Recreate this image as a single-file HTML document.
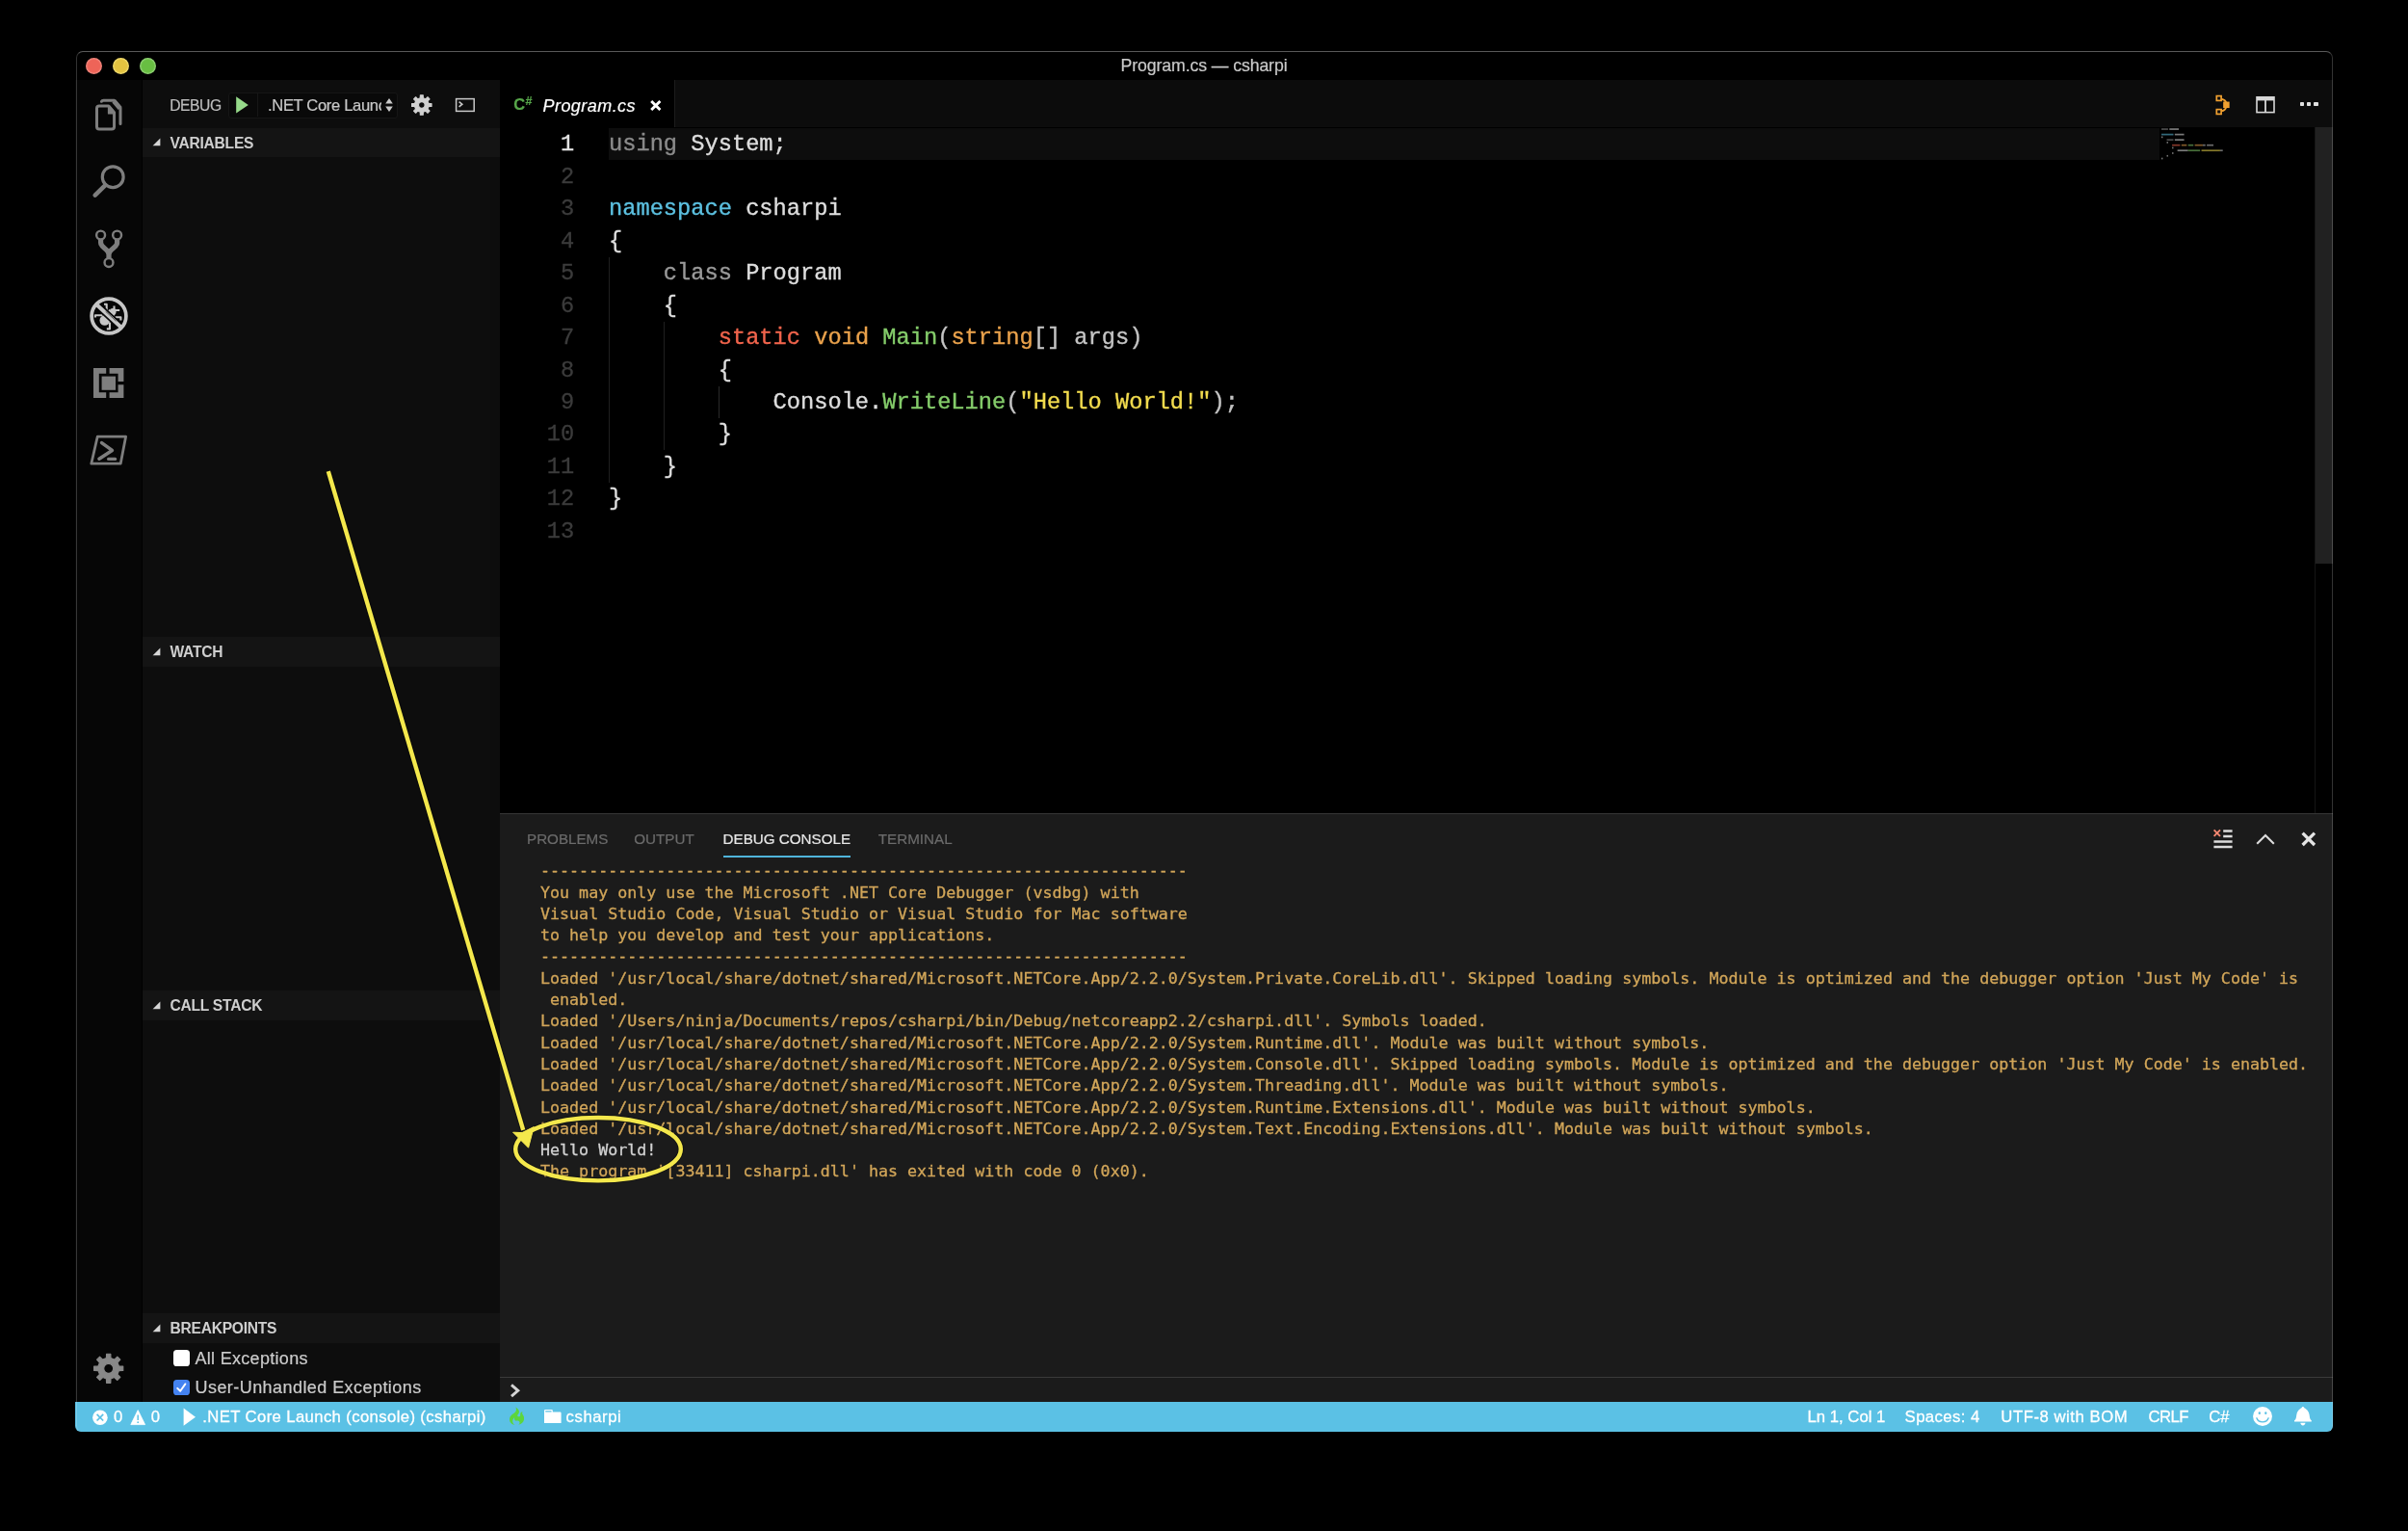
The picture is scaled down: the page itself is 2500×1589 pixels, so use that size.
<!DOCTYPE html><html lang="en"><head><meta charset="utf-8"><title>Program.cs — csharpi</title><style>
*{box-sizing:border-box;margin:0;padding:0}
html,body{width:2500px;height:1589px;background:#000;overflow:hidden}
body{position:relative;font-family:"Liberation Sans",sans-serif;color:#ccc}
.abs{position:absolute}
#win{position:absolute;left:78px;top:53px;width:2344px;height:1433px;border-radius:7px 7px 6px 6px;overflow:hidden;background:#000}
#winborder{position:absolute;left:78.5px;top:53px;width:2343.5px;height:1433px;border-radius:7px 7px 6px 6px;border:1.4px solid rgba(255,255,255,0.2);border-top-color:#595959;border-bottom:0;pointer-events:none}
.t{position:absolute;white-space:pre;line-height:1;-webkit-text-stroke:0.2px}
.ui{font-family:"Liberation Sans",sans-serif}
.hdr{position:absolute;left:147.5px;width:371px;height:30.5px;background:#141414}
.hdr .tx{position:absolute;left:29px;top:0;height:30.5px;line-height:32.4px;font-size:15.6px;letter-spacing:-0.25px;font-weight:bold;color:#cfcfcf;white-space:pre}
.hdr svg{position:absolute;left:10.5px;top:10.6px}
.code{-webkit-text-stroke:0.35px;position:absolute;left:632px;font-family:"Liberation Mono",monospace;font-size:23.69px;line-height:33.45px;height:33.45px;white-space:pre;color:#dcdcdc}
.ln{-webkit-text-stroke:0.3px;position:absolute;left:540px;width:56.3px;text-align:right;font-family:"Liberation Mono",monospace;font-size:23.69px;line-height:33.45px;height:33.45px;color:#3b3b3b;white-space:pre}
.con{-webkit-text-stroke:0.3px;position:absolute;left:561px;font-family:"DejaVu Sans Mono","Liberation Mono",monospace;font-size:16.66px;line-height:22.3px;height:22.3px;white-space:pre;color:#d2a659}
.ptab{-webkit-text-stroke:0.2px;position:absolute;top:862.7px;font-size:15.2px;line-height:15px;color:#6b6b6b;white-space:pre}
.sb{position:absolute;top:1455px;height:31px;line-height:31.2px;font-size:16.7px;color:#fff;white-space:pre;-webkit-text-stroke:0.3px #fff}
</style></head><body>
<div id="win"><div class="abs" style="left:-78px;top:-53px;width:2500px;height:1589px;will-change:transform">
<div class="abs" style="left:78px;top:53px;width:2344px;height:30px;background:#000"></div>
<div class="abs" style="left:89.1px;top:60.0px;width:17px;height:17px;border-radius:50%;background:radial-gradient(circle,#ee6458 0%,#ee6458 52%,#f0837a 64%,#f0837a 100%)"></div>
<div class="abs" style="left:117.0px;top:60.0px;width:17px;height:17px;border-radius:50%;background:radial-gradient(circle,#e3c340 0%,#e3c340 52%,#eed868 64%,#eed868 100%)"></div>
<div class="abs" style="left:144.9px;top:60.0px;width:17px;height:17px;border-radius:50%;background:radial-gradient(circle,#68be42 0%,#68be42 52%,#8cd070 64%,#8cd070 100%)"></div>
<div class="t ui" id="title" style="left:1050px;width:400px;text-align:center;top:60.3px;font-size:17.7px;letter-spacing:-0.1px;color:#cacaca">Program.cs — csharpi</div>
<div class="abs" style="left:78px;top:83px;width:69px;height:1372px;background:#060606"></div>
<div class="abs" style="left:147.5px;top:83px;width:371px;height:1372px;background:#0d0d0d"></div>
<div class="abs" style="left:518.5px;top:83px;width:1903.5px;height:49px;background:#0c0c0c"></div>
<div class="abs" style="left:518.5px;top:83px;width:182px;height:49px;background:#000;border-right:1.4px solid #1d1d1d"></div>
<div class="abs" style="left:518.5px;top:132px;width:1903.5px;height:712px;background:#000"></div>
<div class="abs" style="left:518.5px;top:844px;width:1903.5px;height:611px;background:#1b1b1b;border-top:1.5px solid #363636"></div>
<div class="abs" style="left:78px;top:1455px;width:2344px;height:31px;background:#5bc1e5"></div>
<svg class="abs" style="left:90px;top:95px" width="46" height="46" viewBox="0 0 46 46">
<g fill="none" stroke="#7e7e7e" stroke-width="3" stroke-linecap="round" stroke-linejoin="round">
<path d="M15.4 10.3 Q15.9 9.3 17.5 9.3 H28.6 L35 16.8 V33.6"/>
<path d="M13 15 H22.8 L28.55 21.8 V36.5 Q28.55 39.05 26 39.05 H13 Q10.5 39.05 10.5 36.5 V17.5 Q10.5 15 13 15 Z"/>
</g>
<path d="M28.2 9.9 L34.6 17.4" stroke="#7e7e7e" stroke-width="4.8" fill="none"/>
<path d="M21.9 14 V23.6 H29.6 V21.4 L23.6 14 Z" fill="#7e7e7e"/>
</svg>
<svg class="abs" style="left:90px;top:165px" width="46" height="46" viewBox="0 0 46 46">
<circle cx="27.2" cy="18.7" r="10.9" fill="none" stroke="#7e7e7e" stroke-width="3.2"/>
<path d="M19.4 27.1 L8.7 37.6" stroke="#7e7e7e" stroke-width="4.6" stroke-linecap="round"/>
</svg>
<svg class="abs" style="left:90px;top:233px" width="46" height="50" viewBox="0 0 46 50">
<g fill="none" stroke="#7e7e7e">
<circle cx="14.6" cy="11.1" r="4.45" stroke-width="2.4"/>
<circle cx="31.6" cy="11.1" r="4.45" stroke-width="2.4"/>
<circle cx="23" cy="39.6" r="4.45" stroke-width="2.4"/>
<path d="M14.6 15.4 V19 C14.6 24 23 25.5 23 31 V35.2" stroke-width="5.2"/>
<path d="M31.6 15.4 V19 C31.6 24 23 25.5 23 31" stroke-width="5.2"/>
</g></svg>
<svg class="abs" style="left:91.15px;top:305.9px" width="44" height="44" viewBox="0 0 44 44">
<circle cx="22" cy="22" r="17.9" fill="none" stroke="#c6c6c6" stroke-width="3.7"/>
<g fill="#c6c6c6" stroke="none">
<circle cx="17.75" cy="26.5" r="5.3"/>
<circle cx="26.2" cy="17.4" r="3.4"/>
<path d="M15 22.5 L22.5 15 L28.5 20.5 L21.5 28.5 Z"/>
</g>
<g fill="none" stroke="#c6c6c6" stroke-width="2.1" stroke-linejoin="round">
<path d="M7.9 23.6 V21.3 H15.5 M17 9.8 H19.7 V16 M19.8 35.4 H22.95 V28.5 M28.5 23.2 H34.4 V26.4 M27.5 15 V11.4 M28.5 16 H33.2"/>
</g>
<path d="M11.6 12.3 L32.2 31.3" stroke="#060606" stroke-width="7.4"/>
<path d="M9.4 10.3 L34.3 33.2" stroke="#c6c6c6" stroke-width="4"/>
<path d="M18.6 17.2 L29.6 27.3" stroke="#060606" stroke-opacity="0.75" stroke-width="0.8"/>
</svg>
<svg class="abs" style="left:97.3px;top:382px" width="31.4" height="31" viewBox="0 0 31.4 31">
<path d="M0 0 H13.2 V5.8 H5.8 V25.2 H13.2 V31 H0 Z" fill="#7e7e7e"/>
<path d="M16.6 0 H31.4 V14 H25.6 V5.8 H16.6 Z" fill="#7e7e7e"/>
<path d="M16.6 31 H31.4 V17.2 H25.6 V25.2 H16.6 Z" fill="#7e7e7e"/>
<rect x="8.6" y="8.6" width="14.4" height="14.2" fill="#7e7e7e"/>
</svg>
<svg class="abs" style="left:91px;top:449px" width="44" height="36" viewBox="0 0 44 36">
<path d="M10.2 4.2 H39.6 L34.2 32.2 H3.8 Z" fill="none" stroke="#7e7e7e" stroke-width="2.8" stroke-linejoin="round"/>
<path d="M14.6 10.6 L25.4 18.4 L12 27.2" fill="none" stroke="#7e7e7e" stroke-width="3.6" stroke-linecap="round" stroke-linejoin="round"/>
<path d="M21.6 27.4 H28.6" stroke="#7e7e7e" stroke-width="3.2" stroke-linecap="round"/>
</svg>
<svg class="abs" style="left:0;top:0" width="2500" height="1589" viewBox="0 0 2500 1589">
<path d="M110.45 1409.53 L110.58 1405.25 L114.82 1405.25 L114.95 1409.53 L118.72 1411.09 L121.84 1408.16 L124.84 1411.16 L121.91 1414.28 L123.47 1418.05 L127.75 1418.18 L127.75 1422.42 L123.47 1422.55 L121.91 1426.32 L124.84 1429.44 L121.84 1432.44 L118.72 1429.51 L114.95 1431.07 L114.82 1435.35 L110.58 1435.35 L110.45 1431.07 L106.68 1429.51 L103.56 1432.44 L100.56 1429.44 L103.49 1426.32 L101.93 1422.55 L97.65 1422.42 L97.65 1418.18 L101.93 1418.05 L103.49 1414.28 L100.56 1411.16 L103.56 1408.16 L106.68 1411.09 Z M107.70 1420.30 a5.0 5.0 0 1 0 10.0 0 a5.0 5.0 0 1 0 -10.0 0 Z" fill="#888888" fill-rule="evenodd" stroke="#888888" stroke-width="1.2" stroke-linejoin="round"/>
<path d="M436.29 101.76 L436.36 98.80 L439.24 98.80 L439.31 101.76 L441.85 102.81 L443.99 100.77 L446.03 102.81 L443.99 104.95 L445.04 107.49 L448.00 107.56 L448.00 110.44 L445.04 110.51 L443.99 113.05 L446.03 115.19 L443.99 117.23 L441.85 115.19 L439.31 116.24 L439.24 119.20 L436.36 119.20 L436.29 116.24 L433.75 115.19 L431.61 117.23 L429.57 115.19 L431.61 113.05 L430.56 110.51 L427.60 110.44 L427.60 107.56 L430.56 107.49 L431.61 104.95 L429.57 102.81 L431.61 100.77 L433.75 102.81 Z M434.50 109.00 a3.3 3.3 0 1 0 6.6 0 a3.3 3.3 0 1 0 -6.6 0 Z" fill="#d0d0d0" fill-rule="evenodd" stroke="#d0d0d0" stroke-width="1.2" stroke-linejoin="round"/>
</svg>
<div class="t ui" style="left:176.2px;top:101.8px;font-size:15.7px;letter-spacing:-0.45px;color:#bdbdbd">DEBUG</div>
<div class="abs" style="left:237px;top:95.5px;width:175.5px;height:27px;background:#090909;border:1.3px solid #161616;border-radius:3px"></div>
<div class="abs" style="left:266.5px;top:97px;width:1.3px;height:24px;background:#161616"></div>
<svg class="abs" style="left:244px;top:99px" width="16" height="20" viewBox="0 0 16 20"><path d="M1.2 1.2 L13.8 9.9 L1.2 18.6 Z" fill="#96d98a"/></svg>
<div class="abs" style="left:278px;top:97px;width:117.5px;height:24px;overflow:hidden"><div class="t ui" style="left:0;top:4.5px;font-size:16.6px;letter-spacing:-0.35px;color:#c8c8c8">.NET Core Launch (console) (csharpi)</div></div>
<svg class="abs" style="left:399px;top:101px" width="10" height="16" viewBox="0 0 10 16"><path d="M5 1 L8.8 6.4 H1.2 Z M5 15 L8.8 9.6 H1.2 Z" fill="#c8c8c8"/></svg>
<svg class="abs" style="left:472px;top:101px" width="22" height="16" viewBox="0 0 22 16">
<rect x="1.6" y="1.6" width="18.6" height="12.8" fill="none" stroke="#c8c8c8" stroke-width="1.5"/>
<path d="M4.6 4.6 L7.8 7.2 L4.6 9.8" fill="none" stroke="#c8c8c8" stroke-width="1.6"/>
</svg>
<div class="hdr" style="top:132.6px"><svg width="9" height="9" viewBox="0 0 9 9"><path d="M8.4 0.6 V8.2 H0.6 Z" fill="#d6d6d6"/></svg><div class="tx">VARIABLES</div></div>
<div class="hdr" style="top:661.4px"><svg width="9" height="9" viewBox="0 0 9 9"><path d="M8.4 0.6 V8.2 H0.6 Z" fill="#d6d6d6"/></svg><div class="tx">WATCH</div></div>
<div class="hdr" style="top:1028.2px"><svg width="9" height="9" viewBox="0 0 9 9"><path d="M8.4 0.6 V8.2 H0.6 Z" fill="#d6d6d6"/></svg><div class="tx">CALL STACK</div></div>
<div class="hdr" style="top:1363.3px"><svg width="9" height="9" viewBox="0 0 9 9"><path d="M8.4 0.6 V8.2 H0.6 Z" fill="#d6d6d6"/></svg><div class="tx">BREAKPOINTS</div></div>
<div class="abs" style="left:180px;top:1401.3px;width:16.6px;height:16.6px;border-radius:3.6px;background:#fff"></div>
<div class="t ui" style="left:202.5px;top:1400.5px;font-size:18px;letter-spacing:0.3px;color:#cbcbcb">All Exceptions</div>
<div class="abs" style="left:180px;top:1431.5px;width:16.6px;height:16.6px;border-radius:3.6px;background:#4483f1"></div>
<svg class="abs" style="left:180px;top:1431.5px" width="16.6" height="16.6" viewBox="0 0 16.6 16.6"><path d="M4.2 8.8 L7.2 11.8 L12.4 4.4" fill="none" stroke="#fff" stroke-width="1.9" stroke-linecap="round" stroke-linejoin="round"/></svg>
<div class="t ui" style="left:202.5px;top:1431px;font-size:18px;letter-spacing:0.44px;color:#cbcbcb">User-Unhandled Exceptions</div>
<div class="t ui" style="left:533.2px;top:99.6px;font-size:16.5px;font-weight:bold;color:#57a64a;letter-spacing:-0.3px">C</div>
<div class="t ui" style="left:545.6px;top:99.2px;font-size:12.5px;font-weight:bold;color:#57a64a">#</div>
<div class="t ui" id="tabname" style="left:563.5px;top:101.1px;font-size:18px;letter-spacing:0.45px;font-style:italic;color:#fff">Program.cs</div>
<svg class="abs" style="left:675px;top:103.6px" width="11.6" height="11" viewBox="0 0 11.6 11"><path d="M1.2 1 L10.4 10 M10.4 1 L1.2 10" stroke="#fff" stroke-width="2.9"/></svg>
<svg class="abs" style="left:2298px;top:97px" width="20" height="24" viewBox="0 0 20 24">
<g fill="none" stroke="#f0a030" stroke-width="1.7">
<rect x="3.3" y="2.6" width="4.8" height="4.8"/>
<rect x="3.3" y="16.6" width="4.8" height="4.8"/>
<rect x="11" y="9.4" width="4.8" height="4.8" fill="#f0a030"/>
<path d="M8.1 5.6 C11 6.2 12.6 7.6 13.2 9.4 M8.1 18.4 C11 17.8 12.6 16.4 13.2 14.2" stroke-width="1.8"/>
</g></svg>
<svg class="abs" style="left:2341px;top:99px" width="22" height="20" viewBox="0 0 22 20">
<rect x="2" y="1.8" width="18" height="15.8" fill="none" stroke="#d8d8d8" stroke-width="1.6"/>
<rect x="2" y="1.8" width="18" height="3.6" fill="#d8d8d8"/>
<path d="M11 4 V17" stroke="#d8d8d8" stroke-width="1.8"/>
</svg>
<div class="abs" style="left:2388.3px;top:105.9px;width:4.2px;height:4.2px;background:#e0e0e0;border-radius:0.8px"></div>
<div class="abs" style="left:2395.3px;top:105.9px;width:4.2px;height:4.2px;background:#e0e0e0;border-radius:0.8px"></div>
<div class="abs" style="left:2402.4px;top:105.9px;width:4.2px;height:4.2px;background:#e0e0e0;border-radius:0.8px"></div>
<div class="abs" style="left:632px;top:132.9px;width:1610px;height:32.8px;background:#0d0d0d"></div>
<div class="abs" style="left:2402.5px;top:132px;width:19.5px;height:453px;background:#212121"></div>
<div class="abs" style="left:2402.5px;top:132px;width:1.3px;height:712px;background:#161616"></div>
<div class="abs" style="left:632px;top:266.70px;width:1.3px;height:234.15px;background:#1f1f1f"></div>
<div class="abs" style="left:689.2px;top:333.60px;width:1.3px;height:133.80px;background:#1f1f1f"></div>
<div class="abs" style="left:746px;top:400.50px;width:1.3px;height:33.45px;background:#2a2a2a"></div>
<div class="ln" style="top:133.40px;color:#e4e4e4">1</div>
<div class="code" style="top:133.40px"><span style="color:#8b8b8b">using</span> <span style="color:#dedede">System;</span></div>
<div class="ln" style="top:166.85px;color:#3b3b3b">2</div>
<div class="ln" style="top:200.30px;color:#3b3b3b">3</div>
<div class="code" style="top:200.30px"><span style="color:#5cc0e0">namespace</span> <span style="color:#dedede">csharpi</span></div>
<div class="ln" style="top:233.75px;color:#3b3b3b">4</div>
<div class="code" style="top:233.75px"><span style="color:#dedede">{</span></div>
<div class="ln" style="top:267.20px;color:#3b3b3b">5</div>
<div class="code" style="top:267.20px">    <span style="color:#9a9a9a">class</span> <span style="color:#dedede">Program</span></div>
<div class="ln" style="top:300.65px;color:#3b3b3b">6</div>
<div class="code" style="top:300.65px">    <span style="color:#dedede">{</span></div>
<div class="ln" style="top:334.10px;color:#3b3b3b">7</div>
<div class="code" style="top:334.10px">        <span style="color:#f0644c">static</span> <span style="color:#eaa24c">void</span> <span style="color:#84cc6a">Main</span><span style="color:#c4c4c4">(</span><span style="color:#eaa24c">string</span><span style="color:#c4c4c4">[] args)</span></div>
<div class="ln" style="top:367.55px;color:#3b3b3b">8</div>
<div class="code" style="top:367.55px">        <span style="color:#dedede">{</span></div>
<div class="ln" style="top:401.00px;color:#3b3b3b">9</div>
<div class="code" style="top:401.00px">            <span style="color:#dedede">Console.</span><span style="color:#84cc6a">WriteLine</span><span style="color:#c4c4c4">(</span><span style="color:#f2dc4e">"Hello World!"</span><span style="color:#c4c4c4">);</span></div>
<div class="ln" style="top:434.45px;color:#3b3b3b">10</div>
<div class="code" style="top:434.45px">        <span style="color:#dedede">}</span></div>
<div class="ln" style="top:467.90px;color:#3b3b3b">11</div>
<div class="code" style="top:467.90px">    <span style="color:#dedede">}</span></div>
<div class="ln" style="top:501.35px;color:#3b3b3b">12</div>
<div class="code" style="top:501.35px"><span style="color:#dedede">}</span></div>
<div class="ln" style="top:534.80px;color:#3b3b3b">13</div>
<svg class="abs" style="left:2244px;top:132px;opacity:0.55" width="160" height="40" viewBox="0 0 160 40">
<rect x="0.00" y="1.20" width="6.92" height="1.7" fill="#8b8b8b"/>
<rect x="8.31" y="1.20" width="9.70" height="1.7" fill="#dedede"/>
<rect x="0.00" y="6.74" width="12.46" height="1.7" fill="#5cc0e0"/>
<rect x="13.85" y="6.74" width="9.70" height="1.7" fill="#dedede"/>
<rect x="0.00" y="9.51" width="1.39" height="1.7" fill="#dedede"/>
<rect x="5.54" y="12.28" width="6.92" height="1.7" fill="#8b8b8b"/>
<rect x="13.85" y="12.28" width="9.70" height="1.7" fill="#dedede"/>
<rect x="5.54" y="15.05" width="1.39" height="1.7" fill="#dedede"/>
<rect x="11.08" y="17.82" width="8.31" height="1.7" fill="#f0644c"/>
<rect x="20.77" y="17.82" width="5.54" height="1.7" fill="#eaa24c"/>
<rect x="27.70" y="17.82" width="5.54" height="1.7" fill="#84cc6a"/>
<rect x="34.62" y="17.82" width="8.31" height="1.7" fill="#eaa24c"/>
<rect x="42.94" y="17.82" width="2.77" height="1.7" fill="#c4c4c4"/>
<rect x="47.09" y="17.82" width="6.92" height="1.7" fill="#c4c4c4"/>
<rect x="11.08" y="20.59" width="1.39" height="1.7" fill="#dedede"/>
<rect x="16.62" y="23.36" width="11.08" height="1.7" fill="#dedede"/>
<rect x="27.70" y="23.36" width="12.46" height="1.7" fill="#84cc6a"/>
<rect x="41.55" y="23.36" width="19.39" height="1.7" fill="#f2dc4e"/>
<rect x="60.94" y="23.36" width="2.77" height="1.7" fill="#c4c4c4"/>
<rect x="11.08" y="26.13" width="1.39" height="1.7" fill="#dedede"/>
<rect x="5.54" y="28.90" width="1.39" height="1.7" fill="#dedede"/>
<rect x="0.00" y="31.67" width="1.39" height="1.7" fill="#dedede"/>
</svg>
<div class="ptab ui" style="left:547px;">PROBLEMS</div>
<div class="ptab ui" style="left:658.3px;">OUTPUT</div>
<div class="ptab ui" style="left:750.6px;color:#e6e6e6">DEBUG CONSOLE</div>
<div class="ptab ui" style="left:911.8px;">TERMINAL</div>
<div class="abs" style="left:750.6px;top:888.3px;width:132.4px;height:1.5px;background:#4fb4da"></div>
<svg class="abs" style="left:2296px;top:859px" width="24" height="24" viewBox="0 0 24 24">
<g stroke="#dcdcdc" stroke-width="2.5">
<path d="M12.2 3.4 H21.6 M12.2 8.9 H21.6 M2.4 14.4 H21.6 M2.4 19.9 H21.6"/></g>
<path d="M2.6 2.4 L9 8.8 M9 2.4 L2.6 8.8" stroke="#f48771" stroke-width="1.9"/>
</svg>
<svg class="abs" style="left:2340px;top:862px" width="24" height="18" viewBox="0 0 24 18"><path d="M3.2 13.8 L12 5 L20.8 13.8" fill="none" stroke="#dcdcdc" stroke-width="2.1"/></svg>
<svg class="abs" style="left:2389px;top:863px" width="16" height="16" viewBox="0 0 16 16"><path d="M1.6 1.6 L14 14 M14 1.6 L1.6 14" stroke="#e4e4e4" stroke-width="3.3"/></svg>
<div class="con" style="top:893.20px;">-------------------------------------------------------------------</div>
<div class="con" style="top:915.50px;">You may only use the Microsoft .NET Core Debugger (vsdbg) with</div>
<div class="con" style="top:937.80px;">Visual Studio Code, Visual Studio or Visual Studio for Mac software</div>
<div class="con" style="top:960.10px;">to help you develop and test your applications.</div>
<div class="con" style="top:982.40px;">-------------------------------------------------------------------</div>
<div class="con" style="top:1004.70px;">Loaded '/usr/local/share/dotnet/shared/Microsoft.NETCore.App/2.2.0/System.Private.CoreLib.dll'. Skipped loading symbols. Module is optimized and the debugger option 'Just My Code' is</div>
<div class="con" style="top:1027.00px;"> enabled.</div>
<div class="con" style="top:1049.30px;">Loaded '/Users/ninja/Documents/repos/csharpi/bin/Debug/netcoreapp2.2/csharpi.dll'. Symbols loaded.</div>
<div class="con" style="top:1071.60px;">Loaded '/usr/local/share/dotnet/shared/Microsoft.NETCore.App/2.2.0/System.Runtime.dll'. Module was built without symbols.</div>
<div class="con" style="top:1093.90px;">Loaded '/usr/local/share/dotnet/shared/Microsoft.NETCore.App/2.2.0/System.Console.dll'. Skipped loading symbols. Module is optimized and the debugger option 'Just My Code' is enabled.</div>
<div class="con" style="top:1116.20px;">Loaded '/usr/local/share/dotnet/shared/Microsoft.NETCore.App/2.2.0/System.Threading.dll'. Module was built without symbols.</div>
<div class="con" style="top:1138.50px;">Loaded '/usr/local/share/dotnet/shared/Microsoft.NETCore.App/2.2.0/System.Runtime.Extensions.dll'. Module was built without symbols.</div>
<div class="con" style="top:1160.80px;">Loaded '/usr/local/share/dotnet/shared/Microsoft.NETCore.App/2.2.0/System.Text.Encoding.Extensions.dll'. Module was built without symbols.</div>
<div class="con" style="top:1183.10px;color:#d2d2d2;">Hello World!</div>
<div class="con" style="top:1205.40px;">The program '[33411] csharpi.dll' has exited with code 0 (0x0).</div>
<div class="abs" style="left:518.5px;top:1428.5px;width:1903.5px;height:1.5px;background:#3a3a3a"></div>
<svg class="abs" style="left:529px;top:1434px" width="12" height="18" viewBox="0 0 12 18"><path d="M2 3.4 L8.8 9.3 L2 15.2" fill="none" stroke="#d4d4d4" stroke-width="2.9"/></svg>
<svg class="abs" style="left:95px;top:1462px" width="18" height="18" viewBox="0 0 18 18">
<circle cx="8.9" cy="9.2" r="7.8" fill="#fff"/>
<path d="M5.6 5.9 L12.2 12.5 M12.2 5.9 L5.6 12.5" stroke="#5bc1e5" stroke-width="1.7"/></svg>
<div class="sb ui" style="left:118px">0</div>
<svg class="abs" style="left:134px;top:1462px" width="18" height="18" viewBox="0 0 18 18">
<path d="M9.2 1.6 L16.6 16.6 H1.8 Z" fill="#fff" stroke="#fff" stroke-width="0.8" stroke-linejoin="round"/>
<path d="M9.2 6.4 V12" stroke="#5bc1e5" stroke-width="1.5"/><circle cx="9.2" cy="14.2" r="0.9" fill="#5bc1e5"/></svg>
<div class="sb ui" style="left:156.8px">0</div>
<svg class="abs" style="left:189px;top:1460px" width="16" height="22" viewBox="0 0 16 22"><path d="M1.6 1.6 L14 10.7 L1.6 19.8 Z" fill="#fff"/></svg>
<div class="sb ui" id="sblaunch" style="left:210.3px;letter-spacing:0.38px">.NET Core Launch (console) (csharpi)</div>
<svg class="abs" style="left:528.6px;top:1459.7px" width="15.2" height="19.5" viewBox="0 0 12 16" preserveAspectRatio="none">
<path d="M5.05.31c.81 2.17.41 3.38-.52 4.31C3.55 5.67 1.98 6.45.9 7.98c-1.45 2.05-1.7 6.53 3.53 7.7-2.2-1.16-2.67-4.52-.3-6.61-.61 2.03.53 3.33 1.94 2.86 1.39-.47 2.3.53 2.27 1.67-.02.78-.31 1.44-1.13 1.81 3.42-.59 4.78-3.42 4.78-5.56 0-2.84-2.53-3.22-1.25-5.61-1.52.13-2.03 1.13-1.89 2.75.09 1.08-1.02 1.8-1.86 1.33-.67-.41-.66-1.19-.06-1.78C8.18 5.31 8.68 2.45 5.05.32L5.03.3l.02.01z" fill="#5cd63c"/></svg>
<svg class="abs" style="left:565.4px;top:1462.6px" width="17.6" height="14.8" viewBox="0 0 14 12" preserveAspectRatio="none"><path d="M13 2H7V1c0-.66-.31-1-1-1H1C.45 0 0 .45 0 1v10c0 .55.45 1 1 1h12c.55 0 1-.45 1-1V3c0-.55-.45-1-1-1zM6 2H1V1h5v1z" fill="#fff"/></svg>
<div class="sb ui" style="left:587.6px;letter-spacing:0.55px">csharpi</div>
<div class="sb ui" style="left:1876.6px">Ln 1, Col 1</div>
<div class="sb ui" style="left:1977.6px;letter-spacing:0.42px">Spaces: 4</div>
<div class="sb ui" style="left:2077.3px;letter-spacing:0.55px">UTF-8 with BOM</div>
<div class="sb ui" style="left:2230.6px;letter-spacing:-0.6px">CRLF</div>
<div class="sb ui" style="left:2293.3px">C#</div>
<svg class="abs" style="left:2338.15px;top:1458.95px" width="22" height="22" viewBox="0 0 22 22">
<circle cx="11" cy="11" r="9.95" fill="#fff"/>
<ellipse cx="7.8" cy="7.7" rx="1.15" ry="1.35" fill="#5bc1e5"/><ellipse cx="14.3" cy="7.7" rx="1.15" ry="1.35" fill="#5bc1e5"/>
<path d="M4.9 12.8 C6.6 18.2 15.4 18.2 17.1 12.8" fill="none" stroke="#5bc1e5" stroke-width="1.35" stroke-linecap="round"/></svg>
<svg class="abs" style="left:2382.2px;top:1460.2px" width="17.8" height="19.4" viewBox="0 1 14 15" preserveAspectRatio="none">
<path d="M14 12v1H0v-1l.73-.58c.77-.77.81-2.55 1.19-4.42C2.69 3.23 6 2 6 2c0-.55.45-1 1-1s1 .45 1 1c0 0 3.39 1.23 4.16 5 .38 1.88.42 3.66 1.19 4.42l.66.58H14zm-7 4c1.11 0 2-.89 2-2H5c0 1.11.89 2 2 2z" fill="#fff"/></svg>
<svg class="abs" style="left:0;top:0" width="2500" height="1589" viewBox="0 0 2500 1589">
<g>
<path d="M340.8 489.1 L543.2 1172.8" stroke="#000" stroke-opacity="0.35" stroke-width="6.6"/>
<ellipse cx="621" cy="1192.7" rx="85.8" ry="32.7" fill="none" stroke="#000" stroke-opacity="0.3" stroke-width="6.4"/>
<path d="M340.8 489.1 L543.2 1172.8" stroke="#f4e84c" stroke-width="4.4"/>
<path d="M548.6 1191.2 L532.6 1175.2 L542 1175.6 L554.2 1169.6 Z" fill="#f4e84c" stroke="#f4e84c" stroke-width="1" stroke-linejoin="round"/>
<ellipse cx="621" cy="1192.7" rx="85.8" ry="32.7" fill="none" stroke="#f4e84c" stroke-width="4.4"/>
</g></svg>
</div></div>
<div id="winborder"></div>
</body></html>
